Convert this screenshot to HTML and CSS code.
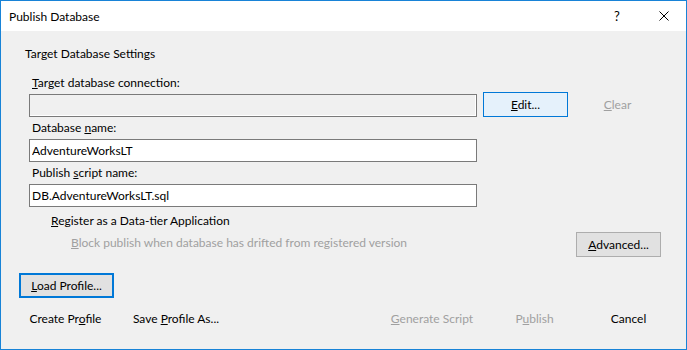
FILE: index.html
```html
<!DOCTYPE html>
<html lang="en">
<head>
    <meta charset="UTF-8">
    <title>Publish Database</title>
    <link rel="stylesheet" href="styles.css">
</head>
<body>
    <div class="window">
        <div class="titlebar">
            <span class="title">Publish Database</span>
            <span class="caption-btn help">?</span>
            <span class="caption-btn close">
                <svg width="10" height="10" viewBox="0 0 10 10">
                    <path d="M0.5 0.5 L9.5 9.5 M9.5 0.5 L0.5 9.5" stroke="#000" stroke-width="1" fill="none"/>
                </svg>
            </span>
        </div>

        <div class="content">
            <div class="heading">Target Database Settings</div>

            <div class="fields">
                <div class="label"><u>T</u>arget database connection:</div>
                <div class="input-row">
                    <input type="text" class="textbox disabled" disabled>
                    <button class="btn btn-focus"><u>E</u>dit...</button>
                    <button class="btn btn-flat disabled-text"><u>C</u>lear</button>
                </div>

                <div class="label">Database <u>n</u>ame:</div>
                <input type="text" class="textbox" value="AdventureWorksLT">

                <div class="label">Publish <u>s</u>cript name:</div>
                <input type="text" class="textbox" value="DB.AdventureWorksLT.sql">

                <div class="option"><u>R</u>egister as a Data-tier Application</div>
                <div class="option-row">
                    <div class="option sub disabled-text"><u>B</u>lock publish when database has drifted from registered version</div>
                    <button class="btn"><u>A</u>dvanced...</button>
                </div>
            </div>

            <button class="btn btn-default load"><u>L</u>oad Profile...</button>

            <div class="footer">
                <button class="btn-flat create">Create Pr<u>o</u>file</button>
                <button class="btn-flat wide save">Save <u>P</u>rofile As...</button>
                <div class="spacer"></div>
                <button class="btn-flat wide disabled-text"><u>G</u>enerate Script</button>
                <button class="btn-flat publish disabled-text">P<u>u</u>blish</button>
                <button class="btn-flat cancel">Cancel</button>
            </div>
        </div>
    </div>
</body>
</html>
```
FILE: styles.css
```css
* {
    box-sizing: border-box;
}

body {
    margin: 0;
    font-family: Lato, "Liberation Sans", sans-serif;
    font-size: 12px;
    color: #000;
}

.window {
    width: 687px;
    height: 350px;
    border: 1px solid #1883d7;
    display: flex;
    flex-direction: column;
    background-color: #f0f0f0;
}

.titlebar {
    height: 30px;
    background-color: #ffffff;
    display: flex;
    align-items: center;
    padding-left: 8px;
}

.title {
    flex: 1;
}

.caption-btn {
    width: 46px;
    height: 30px;
    display: flex;
    align-items: center;
    justify-content: center;
}

.help {
    font-size: 13px;
}

.close {
    padding-left: 1px;
}

.content {
    flex: 1;
    padding: 0 18px;
}

.heading {
    margin-top: 12px;
    line-height: 22px;
    padding-left: 6px;
}

.fields {
    margin-top: 7px;
    margin-left: 10px;
    width: 632px;
}

.label {
    height: 22px;
    line-height: 22px;
    padding-left: 3px;
}

.textbox {
    display: block;
    width: 448px;
    height: 23px;
    margin: 0;
    padding: 0 2px;
    border: 1px solid #7a7a7a;
    background-color: #ffffff;
    font-family: inherit;
    font-size: 12px;
    color: #000;
    outline: none;
}

.textbox.disabled {
    background-color: #f0f0f0;
    box-shadow: inset -1px -1px 0 #ffffff;
}

.input-row {
    display: flex;
    align-items: flex-start;
    height: 23px;
}

.btn {
    width: 85px;
    height: 25px;
    padding: 0;
    border: 1px solid #adadad;
    background-color: #e1e1e1;
    font-family: inherit;
    font-size: 12px;
    color: #000;
}

.input-row .btn {
    margin-top: -2px;
    margin-left: 6px;
}

.input-row .btn-flat {
    margin-left: 7px;
}

.btn-focus {
    border-color: #0078d7;
    background-color: #e5f1fb;
}

.btn-flat {
    width: 85px;
    height: 25px;
    padding: 0;
    border: none;
    background: none;
    font-family: inherit;
    font-size: 12px;
    color: #000;
}

.disabled-text {
    color: #a0a0a0;
}

.option {
    margin-top: 3px;
    line-height: 22px;
    padding-left: 22px;
}

.option-row {
    display: flex;
    align-items: flex-start;
}

.option.sub {
    flex: 1;
    margin-top: 0;
    padding-left: 42px;
}

.btn-default.load {
    display: block;
    width: 95px;
    margin-top: 16px;
    border: 2px solid #0078d7;
}

.footer {
    display: flex;
    margin-top: 8px;
    margin-right: -3px;
}

.footer .create {
    margin-left: 4px;
}

.footer .wide {
    width: 100px;
}

.footer .save {
    margin-left: 18px;
}

.spacer {
    flex: 1;
}

.footer .publish {
    margin-left: 10px;
}

.footer .cancel {
    margin-left: 9px;
}
```
